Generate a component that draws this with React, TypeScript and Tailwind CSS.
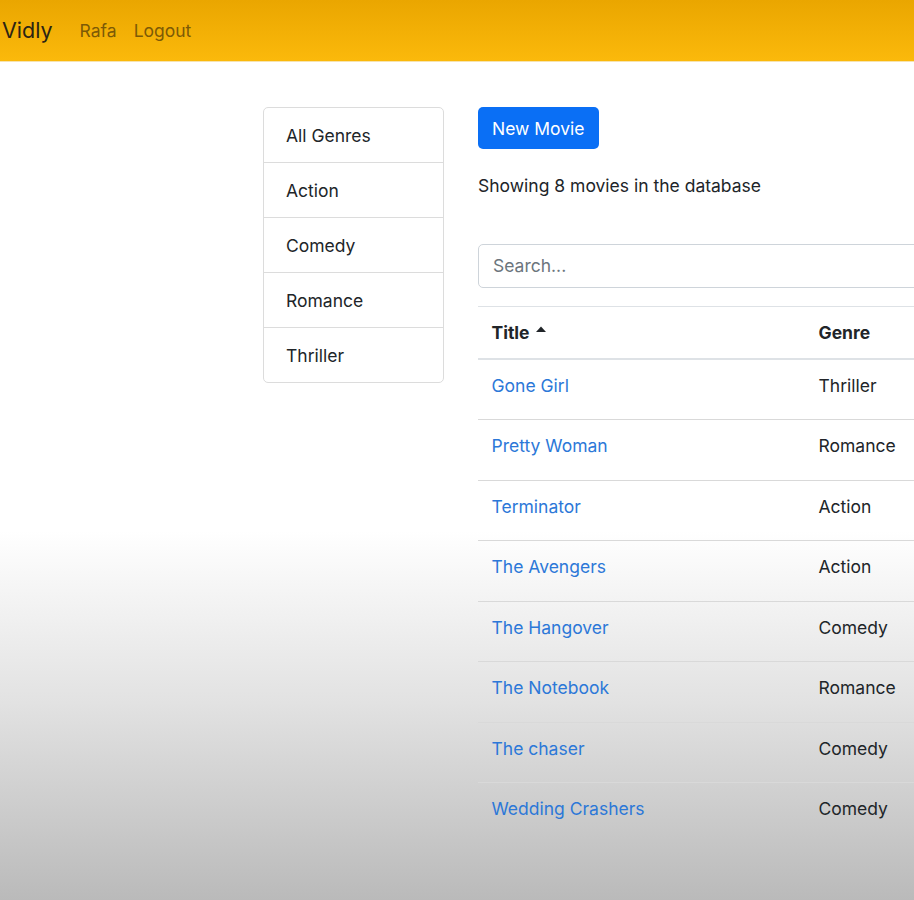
import React from "react";

const genres = ["All Genres", "Action", "Comedy", "Romance", "Thriller"];

const movies = [
  { title: "Gone Girl", genre: "Thriller" },
  { title: "Pretty Woman", genre: "Romance" },
  { title: "Terminator", genre: "Action" },
  { title: "The Avengers", genre: "Action" },
  { title: "The Hangover", genre: "Comedy" },
  { title: "The Notebook", genre: "Romance" },
  { title: "The chaser", genre: "Comedy" },
  { title: "Wedding Crashers", genre: "Comedy" },
];

function SortCaret() {
  return (
    <svg width="12" height="8" viewBox="0 0 12 8" className="ml-[5px] mb-[10px] inline-block">
      <path d="M1 7 L6 1.5 L11 7 Z" fill="#212529" />
    </svg>
  );
}

export default function App() {
  return (
    <div
      className="w-[914px] h-[900px] overflow-hidden bg-[linear-gradient(to_bottom,#ffffff_0%,#ffffff_59%,#e2e2e2_78%,#bababa_100%)] text-[#212529] text-[17.5px] leading-[27px]"
      style={{ fontFamily: 'Inter, "Liberation Sans", Arial, sans-serif' }}
    >
      {/* navbar */}
      <nav className="h-[61px] flex items-center bg-[linear-gradient(to_bottom,#eaa600,#fbb90b)] shadow-[0_1px_0_#f6e3b0]">
        <span className="ml-[2px] text-[21.5px] text-[#2b2414]">Vidly</span>
        <span className="ml-[27px] text-[#7c5a06]">Rafa</span>
        <span className="ml-[17px] text-[#7c5a06]">Logout</span>
      </nav>

      <main className="flex pl-[263px] pt-[46px] gap-[34px]">
        {/* genres */}
        <ul className="w-[181px] shrink-0 self-start border border-[#dcdcdc] rounded-[5px] bg-white">
          {genres.map((g, i) => (
            <li
              key={g}
              className={
                "px-[22px] pt-[13.5px] pb-[13.5px] " + (i > 0 ? "border-t border-[#dcdcdc]" : "")
              }
            >
              {g}
            </li>
          ))}
        </ul>

        {/* movies */}
        <div className="w-[600px] shrink-0">
          <button className="h-[42px] px-[14px] pt-[1px] rounded-[5px] bg-[#0a6ff5] text-white">
            New Movie
          </button>
          <p className="mt-[22.5px]">Showing 8 movies in the database</p>
          <input
            placeholder="Search..."
            className="mt-[45px] w-full h-[44px] px-[14px] border border-[#ced4da] rounded-[5px] bg-white placeholder:text-[#6c757d] outline-none"
          />

          <table className="mt-[18px] w-full border-collapse">
            <thead>
              <tr className="h-[53px] border-t border-[#dee2e6] border-b-2">
                <th className="w-[327px] px-[13.5px] text-left font-bold">
                  Title
                  <SortCaret />
                </th>
                <th className="px-[13.5px] text-left font-bold">Genre</th>
              </tr>
            </thead>
            <tbody>
              {movies.map((m, i) => (
                <tr
                  key={m.title}
                  className={
                    "h-[60.5px] " + (i > 0 ? "border-t border-[#d9d9d9]" : "")
                  }
                >
                  <td className="px-[13.5px] align-top pt-[12px] text-[#2c78d8]">{m.title}</td>
                  <td className="px-[13.5px] align-top pt-[12px]">{m.genre}</td>
                </tr>
              ))}
            </tbody>
          </table>
        </div>
      </main>
    </div>
  );
}
